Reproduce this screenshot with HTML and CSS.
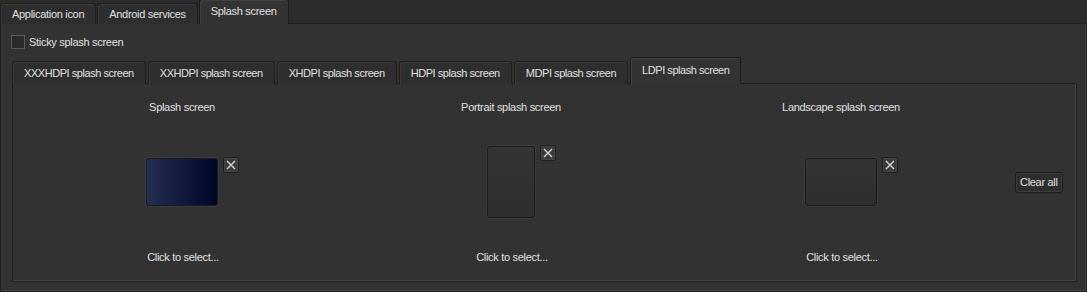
FILE: index.html
```html
<!DOCTYPE html>
<html lang="en">
<head>
    <meta charset="UTF-8">
    <title>Splash screen settings</title>
    <link rel="stylesheet" href="styles.css">
</head>
<body>

<div class="tabbar">
    <div class="tab">Application icon</div>
    <div class="tab">Android services</div>
    <div class="tab active">Splash screen</div>
</div>

<div class="pane outer">
    <label class="check">
        <span class="box"></span>
        Sticky splash screen
    </label>

    <div class="tabbar inner-tabs">
        <div class="tab">XXXHDPI splash screen</div>
        <div class="tab">XXHDPI splash screen</div>
        <div class="tab">XHDPI splash screen</div>
        <div class="tab">HDPI splash screen</div>
        <div class="tab">MDPI splash screen</div>
        <div class="tab active">LDPI splash screen</div>
    </div>

    <div class="pane inner">
        <div class="screens">
            <!-- labels -->
            <div class="caption">Splash screen</div>
            <div class="caption">Portrait splash screen</div>
            <div class="caption">Landscape splash screen</div>
            <div></div>

            <!-- previews -->
            <div class="preview">
                <div class="thumb wide filled"></div>
                <button class="remove"><svg viewBox="0 0 14 14"><path d="M3 3L11 11M11 3L3 11"/></svg></button>
            </div>
            <div class="preview">
                <div class="thumb tall"></div>
                <button class="remove"><svg viewBox="0 0 14 14"><path d="M3 3L11 11M11 3L3 11"/></svg></button>
            </div>
            <div class="preview">
                <div class="thumb wide"></div>
                <button class="remove"><svg viewBox="0 0 14 14"><path d="M3 3L11 11M11 3L3 11"/></svg></button>
            </div>
            <div class="clear-cell">
                <button class="btn">Clear all</button>
            </div>

            <!-- pickers -->
            <div class="caption pick">Click to select...</div>
            <div class="caption pick">Click to select...</div>
            <div class="caption pick">Click to select...</div>
            <div></div>
        </div>
    </div>
</div>

</body>
</html>
```

FILE: styles.css
```css
body {
    margin: 0;
    background-color: #2c2c2c;
    color: #e0e0e0;
    font-family: "Liberation Sans", Arial, sans-serif;
    font-size: 11px;
    letter-spacing: -0.3px;
    width: 1087px;
    height: 292px;
    overflow: hidden;
}

.tabbar {
    display: flex;
    align-items: flex-end;
    height: 24px;
    position: relative;
    z-index: 1;
}
.tab {
    height: 20px;
    line-height: 20px;
    padding: 0 11px;
    margin-right: 1px;
    background-color: #2e2e2e;
    border: 1px solid #1e1e1e;
    border-bottom: none;
    border-radius: 3px 3px 0 0;
    box-shadow: inset 1px 1px 0 #3a3a3a;
    white-space: nowrap;
}
.tab.active {
    height: 24px;
    line-height: 22px;
    background-color: #333333;
    box-shadow: inset 1px 1px 0 #404040;
}

.pane {
    background-color: #323232;
    border: 1px solid #1f1f1f;
    box-shadow: inset -1px -1px 0 #444444;
}
.outer {
    margin-top: -1px;
    height: 267px;
    padding: 0 9px 0 10px;
}

.check {
    display: flex;
    align-items: center;
    gap: 4px;
    height: 14px;
    margin-top: 11px;
}
.box {
    width: 12px;
    height: 12px;
    border: 1px solid #5a5a5a;
    background-color: #2a2a2a;
}

.inner-tabs {
    margin-top: 9px;
    margin-left: 1px;
    height: 26px;
    letter-spacing: -0.45px;
}
.inner-tabs .tab {
    height: 22px;
    line-height: 22px;
    margin-right: 2px;
}
.inner-tabs .tab.active {
    height: 26px;
    line-height: 24px;
}

.inner {
    margin-left: 1px;
    margin-top: -1px;
    height: 197px;
}

.screens {
    display: grid;
    grid-template-columns: 338px 320px 340px 1fr;
    grid-template-rows: 20px 128px 20px;
    margin-top: 13px;
    row-gap: 1px;
}
.caption {
    text-align: center;
    line-height: 20px;
}
.pick {
    padding-left: 2px;
}

.preview {
    display: grid;
    grid-template-columns: 1fr auto 1fr;
    align-self: center;
}
.thumb {
    grid-column: 2;
    border: 1px solid #1c1c1c;
    border-radius: 3px;
    background: linear-gradient(#343434, #2e2e2e);
    box-shadow: 0 0 0 1px #3a3a3a;
}
.thumb.wide {
    width: 70px;
    height: 46px;
}
.thumb.tall {
    width: 46px;
    height: 70px;
}
.thumb.filled {
    background: linear-gradient(90deg, #242e50, #000529);
}

.remove {
    grid-column: 3;
    justify-self: start;
    align-self: start;
    margin: -1px 0 0 5px;
    width: 16px;
    height: 16px;
    padding: 0;
    background-color: #3b3b3b;
    border: 1px solid #1e1e1e;
    border-radius: 2px;
    box-shadow: inset 0 0 0 1px #444444;
    display: flex;
}
.remove svg {
    width: 14px;
    height: 14px;
    fill: none;
    stroke: #d4d4d4;
    stroke-width: 1.4;
}

.clear-cell {
    display: flex;
    align-items: center;
    padding-left: 4px;
}
.btn {
    height: 21px;
    padding: 0 4px;
    background-color: #2e2e2e;
    border: 1px solid #1c1c1c;
    border-radius: 3px;
    box-shadow: inset 0 0 0 1px #3c3c3c;
    color: #e0e0e0;
    font-family: "Liberation Sans", Arial, sans-serif;
    font-size: 11px;
    letter-spacing: -0.3px;
}
```
